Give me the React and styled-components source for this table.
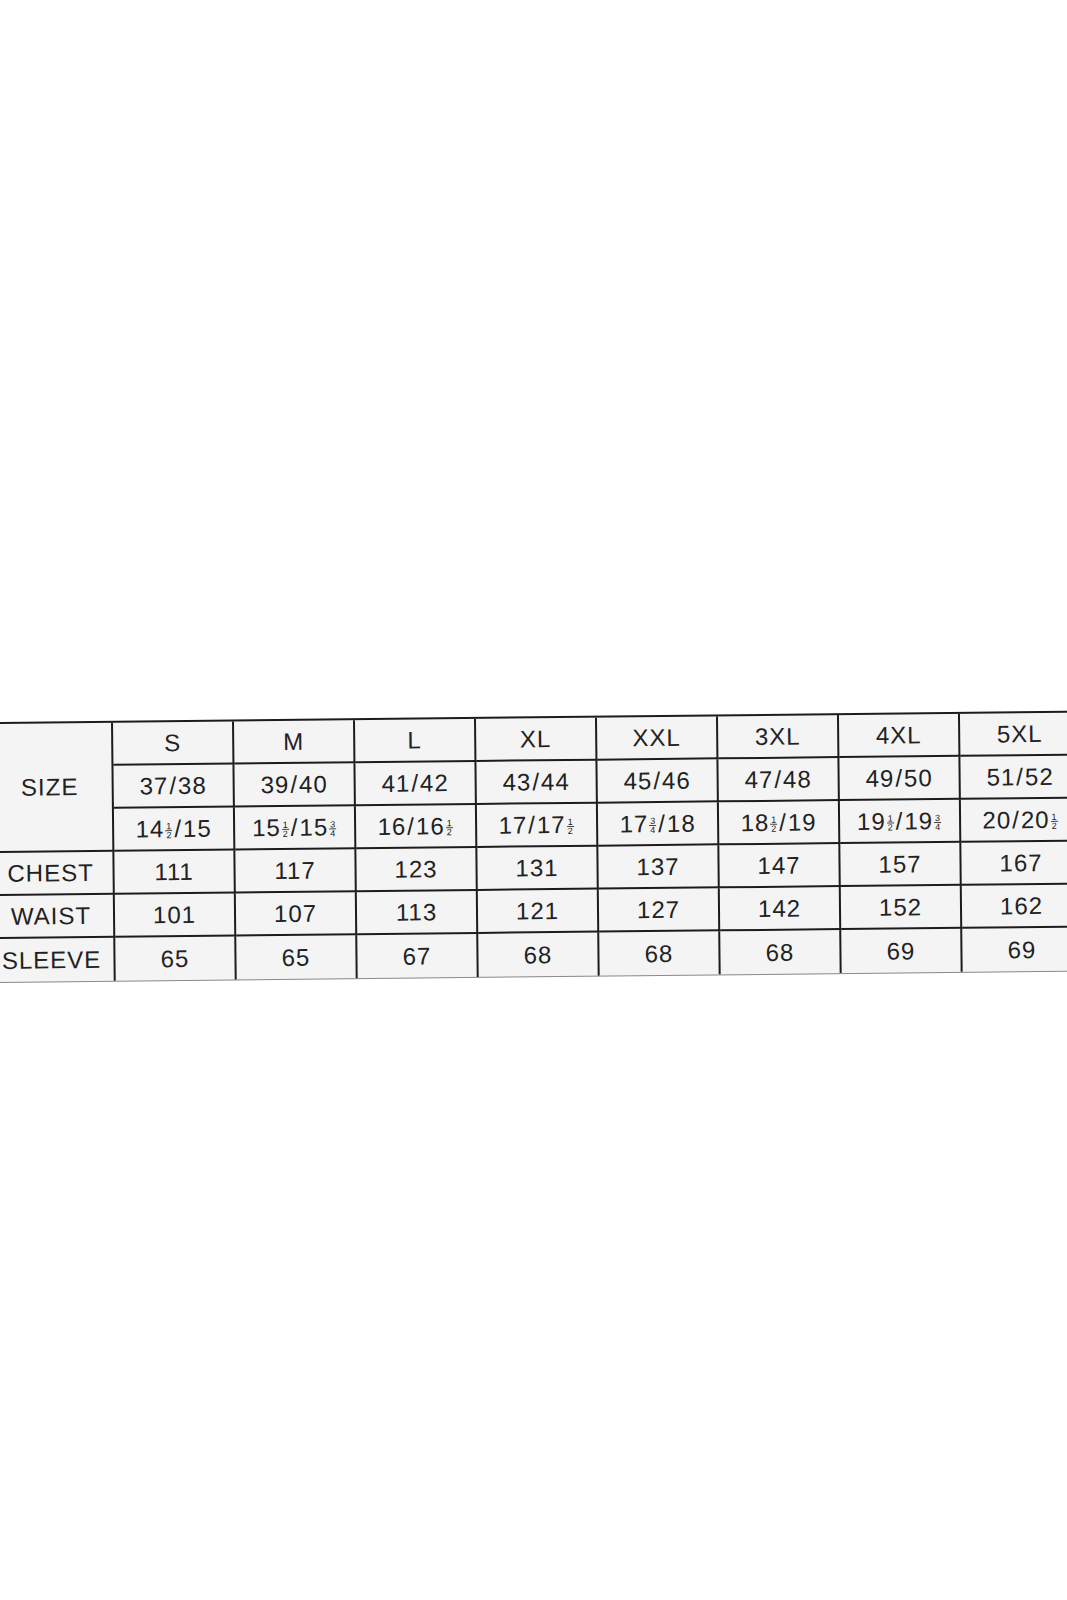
import React from "react";
import styled, { createGlobalStyle } from "styled-components";

const Global = createGlobalStyle`
  html, body { margin: 0; padding: 0; background: #ffffff; }
  body { font-family: "Liberation Sans", Arial, sans-serif; }
`;

const Page = styled.div`
  width: 1067px;
  height: 1600px;
  overflow: hidden;
  padding-top: 722px;
  box-sizing: border-box;
  background: #ffffff;
`;

const Chart = styled.div`
  display: grid;
  grid-template-columns: 124px repeat(8, 121px);
  grid-template-rows: repeat(6, 43px);
  width: max-content;
  margin-left: -11px;
  background: #f4f4f4;
  border-top: 2px solid #1c1c1c;
  border-bottom: 1px solid #8a8a8a;
  transform: rotate(-0.6deg);
  transform-origin: left top;
  color: #222222;
  font-family: "Liberation Sans", Arial, sans-serif;
  font-size: 24px;
  letter-spacing: 1px;
`;

const Cell = styled.div`
  box-sizing: border-box;
  display: flex;
  align-items: center;
  justify-content: center;
  white-space: nowrap;
  border-right: 2px solid #1c1c1c;
  border-bottom: ${(p) => (p.$last ? "none" : "2px solid #1c1c1c")};
  grid-row: ${(p) => p.$row} / span ${(p) => p.$span || 1};
  grid-column: ${(p) => p.$col};
`;

const Label = styled(Cell)`
  padding-right: 2px;
`;

const Slash = styled.span`
  margin: 0 1px;
`;

const FracBox = styled.span`
  display: inline-flex;
  flex-direction: column;
  align-items: center;
  font-size: 9px;
  line-height: 8px;
  letter-spacing: 0;
  margin: 0 1px;
  transform: translateY(2px);
`;

const Num = styled.span`
  border-bottom: 1px solid #444;
  line-height: 8px;
  padding: 0 1px;
`;

const Frac = ({ n, d }) => (
  <FracBox>
    <Num>{n}</Num>
    <span>{d}</span>
  </FracBox>
);

const S = () => <Slash>/</Slash>;

const sizes = ["S", "M", "L", "XL", "XXL", "3XL", "4XL", "5XL"];
const eu = [
  ["37", "38"], ["39", "40"], ["41", "42"], ["43", "44"],
  ["45", "46"], ["47", "48"], ["49", "50"], ["51", "52"],
].map(([a, b]) => <>{a}<S />{b}</>);
const inch = [
  <>14<Frac n="1" d="2" /><S />15</>,
  <>15<Frac n="1" d="2" /><S />15<Frac n="3" d="4" /></>,
  <>16<S />16<Frac n="1" d="2" /></>,
  <>17<S />17<Frac n="1" d="2" /></>,
  <>17<Frac n="3" d="4" /><S />18</>,
  <>18<Frac n="1" d="2" /><S />19</>,
  <>19<Frac n="1" d="2" /><S />19<Frac n="3" d="4" /></>,
  <>20<S />20<Frac n="1" d="2" /></>,
];
const chest = ["111", "117", "123", "131", "137", "147", "157", "167"];
const waist = ["101", "107", "113", "121", "127", "142", "152", "162"];
const sleeve = ["65", "65", "67", "68", "68", "68", "69", "69"];

const dataRows = [sizes, eu, inch, chest, waist, sleeve];

export default function App() {
  return (
    <>
      <Global />
      <Page>
        <Chart>
          <Label $row={1} $span={3} $col={1}>SIZE</Label>
          <Label $row={4} $col={1}>CHEST</Label>
          <Label $row={5} $col={1}>WAIST</Label>
          <Label $row={6} $col={1} $last>SLEEVE</Label>
          {dataRows.map((row, r) =>
            row.map((v, c) => (
              <Cell key={`${r}-${c}`} $row={r + 1} $col={c + 2} $last={r === 5}>
                {v}
              </Cell>
            ))
          )}
        </Chart>
      </Page>
    </>
  );
}
